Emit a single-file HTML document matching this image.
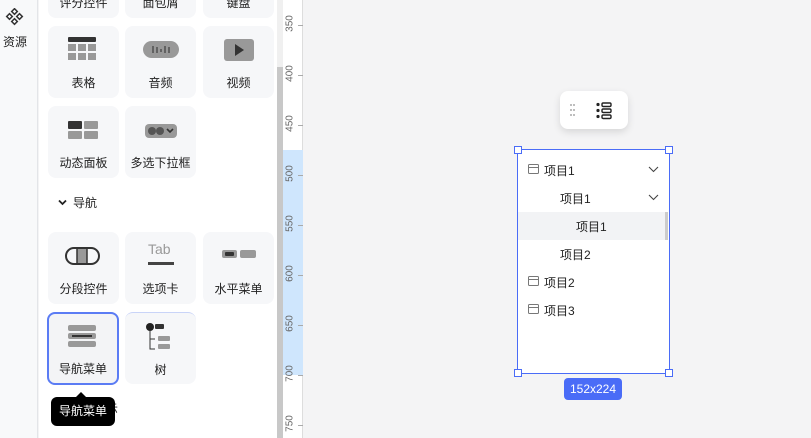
<!DOCTYPE html>
<html><head><meta charset="utf-8"><style>
*{margin:0;padding:0;box-sizing:border-box}
body{width:811px;height:438px;overflow:hidden;position:relative;background:#f4f4f5;font-family:"Liberation Sans","Noto Sans CJK SC",sans-serif;color:#222}
.a{position:absolute}
.card{position:absolute;width:71px;height:72px;background:#f6f7f9;border-radius:8px;font-size:12px;text-align:center}
.card .t{position:absolute;left:0;right:0;top:48px}
.card svg{position:absolute;left:19px;top:10px}
.row{position:absolute;left:518px;width:150px;height:28px;font-size:12px;line-height:28px}
.h{position:absolute;width:8px;height:8px;border:1px solid #4a6cf7;background:#fff}
.rl{position:absolute;left:280px;width:20px;font-size:10px;color:#666;transform:rotate(-90deg);text-align:center}
.tk{position:absolute;left:298px;width:5px;height:1px;background:#aaa}
</style></head><body>
<div class="a" style="left:0;top:0;width:38px;height:438px;background:#f8f9fa;border-right:1px solid #e3e5e8"></div>
<svg class="a" style="left:5px;top:8px" width="20" height="20" viewBox="0 0 20 20"><g fill="none" stroke="#333" stroke-width="1.5"><rect x="7.5" y="1.5" width="4" height="4" transform="rotate(45 9.5 3.5)"/><rect x="2.5" y="6.5" width="4" height="4" transform="rotate(45 4.5 8.5)"/><rect x="12.5" y="6.5" width="4" height="4" transform="rotate(45 14.5 8.5)"/><rect x="7.5" y="11.5" width="4" height="4" transform="rotate(45 9.5 13.5)"/></g></svg>
<div class="a" style="left:3px;top:33px;font-size:12px">资源</div>
<div class="a" style="left:39px;top:0;width:238px;height:438px;background:#fff"></div>
<div class="a" style="left:277px;top:0;width:6px;height:438px;background:#f0f0f0"></div>
<div class="a" style="left:277px;top:67px;width:6px;height:371px;background:#c8c8c8"></div>
<div class="a" style="left:283px;top:0;width:20px;height:438px;background:#fff;border-right:1px solid #ddd"></div>
<div class="a" style="left:283px;top:150px;width:20px;height:225px;background:#cfe6fd"></div>
<div class="tk" style="top:25px"></div><div class="rl" style="top:18px">350</div>
<div class="tk" style="top:75px"></div><div class="rl" style="top:68px">400</div>
<div class="tk" style="top:125px"></div><div class="rl" style="top:118px">450</div>
<div class="tk" style="top:175px"></div><div class="rl" style="top:168px">500</div>
<div class="tk" style="top:225px"></div><div class="rl" style="top:218px">550</div>
<div class="tk" style="top:275px"></div><div class="rl" style="top:268px">600</div>
<div class="tk" style="top:325px"></div><div class="rl" style="top:318px">650</div>
<div class="tk" style="top:375px"></div><div class="rl" style="top:368px">700</div>
<div class="tk" style="top:425px"></div><div class="rl" style="top:418px">750</div>

<div class="card" style="left:48px;top:-54px"><div class="t">评分控件</div></div>
<div class="card" style="left:125px;top:-54px"><div class="t">面包屑</div></div>
<div class="card" style="left:203px;top:-54px"><div class="t">键盘</div></div>

<div class="card" style="left:48px;top:26px"><svg width="32" height="28"><rect x="1" y="1" width="28" height="5" rx="1" fill="#333"/><g fill="#999"><rect x="1" y="8" width="8" height="7"/><rect x="11" y="8" width="8" height="7"/><rect x="21" y="8" width="8" height="7"/><rect x="1" y="17" width="8" height="7"/><rect x="11" y="17" width="8" height="7"/><rect x="21" y="17" width="8" height="7"/></g></svg><div class="t">表格</div></div>
<div class="card" style="left:125px;top:26px"><svg width="40" height="28" style="left:17px"><rect x="1" y="5" width="36" height="17" rx="8.5" fill="#999"/><g stroke="#444" stroke-width="1.3"><line x1="11" y1="10" x2="11" y2="17"/><line x1="15" y1="11" x2="15" y2="17"/><line x1="19" y1="13" x2="19" y2="16"/><line x1="23" y1="10" x2="23" y2="17"/><line x1="27" y1="11" x2="27" y2="17"/></g></svg><div class="t">音频</div></div>
<div class="card" style="left:203px;top:26px"><svg width="32" height="28"><rect x="2" y="3" width="30" height="22" rx="3" fill="#999"/><path d="M13 8 L22 14 L13 20Z" fill="#333"/></svg><div class="t">视频</div></div>

<div class="card" style="left:48px;top:106px"><svg width="32" height="28"><rect x="1" y="5" width="14" height="8" rx="1" fill="#333"/><rect x="17" y="5" width="14" height="8" rx="1" fill="#999"/><rect x="1" y="15" width="14" height="8" rx="1" fill="#999"/><rect x="17" y="15" width="14" height="8" rx="1" fill="#999"/></svg><div class="t">动态面板</div></div>
<div class="card" style="left:125px;top:106px"><svg width="36" height="28" style="left:19px"><rect x="1" y="8" width="32" height="14" rx="4" fill="#999"/><circle cx="8" cy="15" r="4" fill="#555"/><circle cx="16" cy="15" r="4" fill="#555"/><path d="M23 13 l3 3 l3-3" stroke="#333" stroke-width="1.6" fill="none"/></svg><div class="t">多选下拉框</div></div>

<svg class="a" style="left:58px;top:199px" width="9" height="7"><path d="M1 1.5 L4.5 5 L8 1.5" stroke="#222" stroke-width="1.8" fill="none"/></svg>
<div class="a" style="left:73px;top:194px;font-size:12px">导航</div>

<div class="card" style="left:48px;top:232px"><svg width="36" height="28" style="left:17px"><rect x="1" y="6" width="33" height="16" rx="8" fill="none" stroke="#333" stroke-width="2"/><rect x="12" y="7" width="10" height="14" fill="#999"/><line x1="12" y1="7" x2="12" y2="21" stroke="#333" stroke-width="1.5"/><line x1="22" y1="7" x2="22" y2="21" stroke="#333" stroke-width="1.5"/></svg><div class="t">分段控件</div></div>
<div class="card" style="left:125px;top:232px"><div class="a" style="left:23px;top:9px;font-size:14px;color:#999">Tab</div><div class="a" style="left:23px;top:30px;width:26px;height:3px;background:#444"></div><div class="t">选项卡</div></div>
<div class="card" style="left:203px;top:232px"><div class="a" style="left:19px;top:18px;width:15px;height:8px;background:#999;border-radius:2px"></div><div class="a" style="left:22px;top:20px;width:9px;height:4px;background:#333;border-radius:1px"></div><div class="a" style="left:37px;top:18px;width:16px;height:8px;background:#999;border-radius:2px"></div><div class="t">水平菜单</div></div>

<div class="card" style="left:47px;top:312px;border:2px solid #5b7cf4;width:72px;height:73px;background:#f3f4f6"><svg width="32" height="28" style="left:18px;top:8px"><rect x="1" y="3" width="28" height="6" rx="2" fill="#999"/><rect x="1" y="11" width="28" height="6" rx="2" fill="#999"/><rect x="5" y="13" width="20" height="2" fill="#333"/><rect x="1" y="19" width="28" height="6" rx="2" fill="#999"/></svg><div class="t" style="top:46px">导航菜单</div></div>
<div class="card" style="left:125px;top:312px;border-top:1px solid #c9d4f8"><svg width="32" height="32" style="left:19px;top:8px"><circle cx="6" cy="6" r="4" fill="#222"/><path d="M6 10 V28 H11 M6 18 H11" stroke="#333" fill="none" stroke-width="1"/><rect x="11" y="3" width="9" height="5" rx="1" fill="#333"/><rect x="14" y="15" width="12" height="5" rx="1" fill="#999"/><rect x="14" y="23" width="12" height="5" rx="1" fill="#999"/></svg><div class="t">树</div></div>

<div class="a" style="left:106px;top:400px;font-size:12px">示</div>
<div class="a" style="left:51px;top:397px;width:64px;height:29px;background:#000;border-radius:6px;color:#fff;font-size:12px;line-height:29px;text-align:center">导航菜单</div>
<div class="a" style="left:76px;top:392px;width:0;height:0;border-left:5px solid transparent;border-right:5px solid transparent;border-bottom:5px solid #000"></div>

<div class="a" style="left:560px;top:91px;width:68px;height:38px;background:#fff;border-radius:8px;box-shadow:0 3px 8px rgba(0,0,0,.12)"></div>
<svg class="a" style="left:568px;top:102px" width="50" height="18"><g fill="#aaa"><circle cx="3" cy="3" r="1"/><circle cx="6" cy="3" r="1"/><circle cx="3" cy="8" r="1"/><circle cx="6" cy="8" r="1"/><circle cx="3" cy="13" r="1"/><circle cx="6" cy="13" r="1"/></g><g fill="#222"><circle cx="30" cy="2.5" r="1.6"/><circle cx="30" cy="8.5" r="1.6"/><circle cx="30" cy="14.5" r="1.6"/></g><g fill="none" stroke="#222" stroke-width="1.4"><rect x="34" y="1" width="9" height="3.5" rx="1.2"/><rect x="34" y="7" width="9" height="3.5" rx="1.2"/><rect x="34" y="13" width="9" height="3.5" rx="1.2"/></g></svg>

<div class="a" style="left:517px;top:149px;width:153px;height:225px;background:#fff;border:1px solid #4a6cf7"></div>
<div class="row" style="top:212px;background:#f2f3f5"></div>
<div class="a" style="left:665px;top:212px;width:3px;height:28px;background:#ccc"></div>
<svg class="a" style="left:528px;top:164px" width="11" height="160"><g fill="none" stroke="#777" stroke-width="1"><rect x=".5" y=".5" width="10" height="9" rx="1"/><line x1=".5" y1="3.5" x2="10.5" y2="3.5"/><rect x=".5" y="112.5" width="10" height="9" rx="1"/><line x1=".5" y1="115.5" x2="10.5" y2="115.5"/><rect x=".5" y="140.5" width="10" height="9" rx="1"/><line x1=".5" y1="143.5" x2="10.5" y2="143.5"/></g></svg>
<div class="row" style="top:157px;padding-left:26px">项目1</div>
<div class="row" style="top:185px;padding-left:42px">项目1</div>
<div class="row" style="top:213px;padding-left:58px">项目1</div>
<div class="row" style="top:241px;padding-left:42px">项目2</div>
<div class="row" style="top:269px;padding-left:26px">项目2</div>
<div class="row" style="top:297px;padding-left:26px">项目3</div>
<svg class="a" style="left:648px;top:165px" width="12" height="40"><g fill="none" stroke="#444" stroke-width="1.1"><path d="M1 2 L5.5 6.5 L10 2"/><path d="M1 30 L5.5 34.5 L10 30"/></g></svg>
<div class="h" style="left:514px;top:146px"></div><div class="h" style="left:665px;top:146px"></div>
<div class="h" style="left:514px;top:369px"></div><div class="h" style="left:665px;top:369px"></div>
<div class="a" style="left:564px;top:378px;width:58px;height:22px;background:#4a6cf7;border-radius:4px;color:#fff;font-size:12px;line-height:22px;text-align:center">152x224</div>
</body></html>
